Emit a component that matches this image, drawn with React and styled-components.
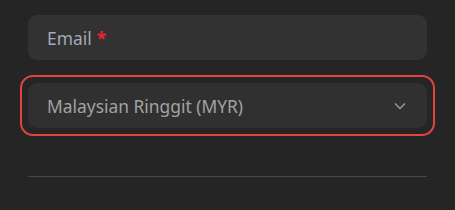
import React from 'react';
import styled, { createGlobalStyle } from 'styled-components';

const Global = createGlobalStyle`
    html, body {
        margin: 0;
        padding: 0;
        background: #252525;
    }
    body {
        font-family: "Noto Sans", "Liberation Sans", sans-serif;
    }
`

const Page = styled.div`
    width: 455px;
    height: 210px;
    box-sizing: border-box;
    padding: 15px 28px 0 28px;
    display: flex;
    flex-direction: column;
`

// 输入框
const Field = styled.div`
    display: flex;
    align-items: center;
    height: 45px;
    padding: 0 19px;
    border-radius: 9px;
    background: #323232;
    font-size: 17.4px;
    color: ${props => props.muted ? '#a2a2a4' : '#a5a8b6'};
`

const Star = styled.span`
    color: #e8262a;
    margin-left: 5px;
    font-weight: 700;
`

// 选中状态的红框
const Focus = styled.div`
    margin: 15px -8px 0;
    padding: 6px;
    border: 2px solid #e0463c;
    border-radius: 13px;
`

const Select = styled(Field)`
    justify-content: space-between;
    padding-right: 21px;
    background: #303030;
`

const Divider = styled.div`
    margin-top: 40px;
    height: 1px;
    background: #464646;
`

function App() {
    return (
        <>
            <Global />
            <Page>
                <Field>Email<Star>*</Star></Field>
                <Focus>
                    <Select muted>
                        <span>Malaysian Ringgit (MYR)</span>
                        <svg width="12" height="8" viewBox="0 0 12 8" fill="none">
                            <path d="M1 1.5 L6 6.5 L11 1.5" stroke="#9a9a9a" strokeWidth="1.4" />
                        </svg>
                    </Select>
                </Focus>
                <Divider />
            </Page>
        </>
    )
}

export default App;
